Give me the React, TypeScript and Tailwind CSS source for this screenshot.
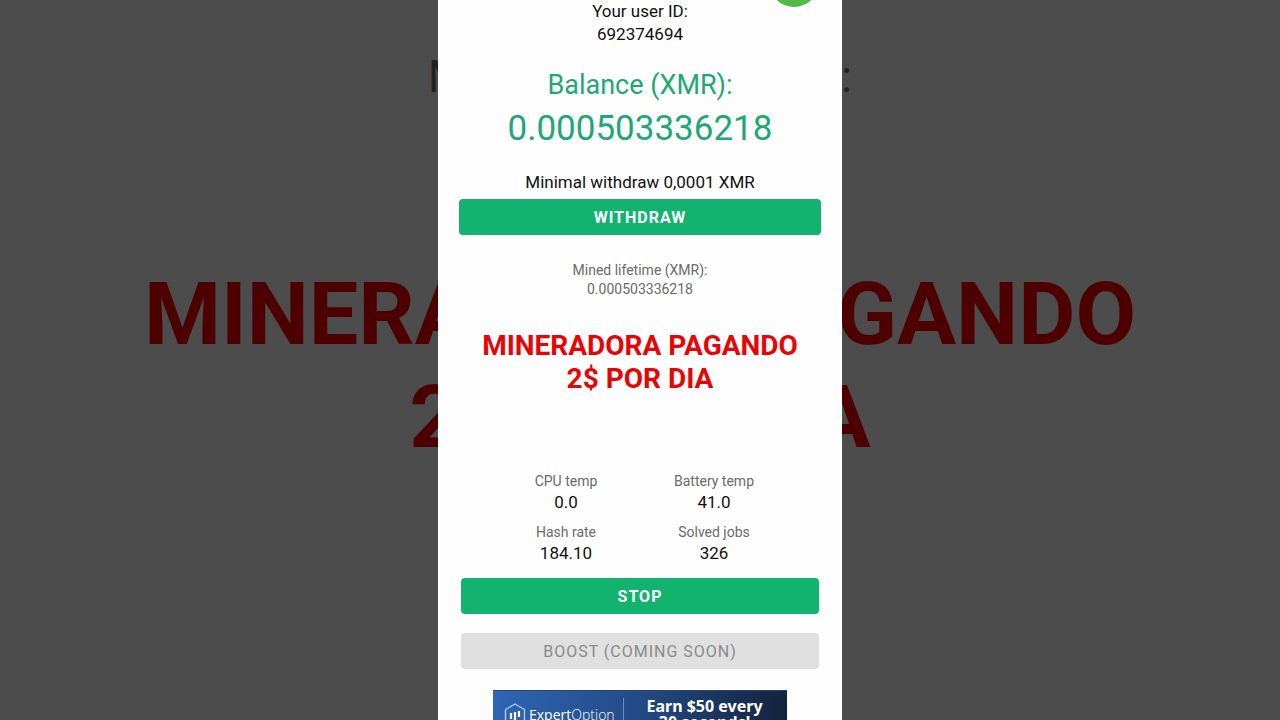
const stats = [
    { label: "CPU temp", value: "0.0" },
    { label: "Battery temp", value: "41.0" },
    { label: "Hash rate", value: "184.10" },
    { label: "Solved jobs", value: "326" },
];

// Enlarged, darkened copy of the screen that fills the sides
const Backdrop = () => (
    <div aria-hidden="true" className="absolute inset-0 overflow-hidden whitespace-nowrap pt-[47px]">
        <div className="flex flex-col items-center">
            <p className="text-[44px] leading-[60px] text-[#222222]">Mined lifetime (XMR):</p>
            <p className="mt-[155px] text-center text-[88px] leading-[103px] font-bold text-[#4c0000]">
                MINERADORA PAGANDO
                <br />
                2$ POR DIA
            </p>
        </div>
    </div>
);

const AdBanner = () => (
    <a
        href="#ad"
        className="mt-[21px] flex h-[46px] w-[294px] shrink-0 items-start self-center border-t border-[#2b4470] bg-linear-to-r from-[#2f66b5] via-[#234a86] to-[#13233d] pl-[11px] text-white"
    >
        <svg className="mt-3 h-6 w-[22px] shrink-0" viewBox="0 0 22 24" fill="none">
            <path
                d="M11 1 L20.5 6.5 V17.5 L11 23 L1.5 17.5 V6.5 Z"
                stroke="#a9cdf2"
                strokeWidth="1.4"
                strokeLinejoin="round"
            />
            <path d="M7 10 V16 M11 9 V17 M15 8 V14" stroke="#ffffff" strokeWidth="2.2" />
        </svg>
        <span className="mt-3 ml-[3px] w-[94px] text-left font-['Open_Sans',sans-serif] text-[14px] leading-6">
            <span className="font-medium">Expert</span>
            <span className="font-light">Option</span>
        </span>
        <span className="mt-[7px] h-8 w-px bg-[#6f8db8]" />
        <span className="flex-1 pt-[7px] pr-[2px] text-center font-['Noto_Sans',sans-serif] text-[16px] leading-[16px] font-bold">
            Earn $50 every
            <br />
            30 seconds!
        </span>
    </a>
);

const App = () => {
    return (
        <div className="relative h-screen overflow-hidden bg-[#4c4c4c] font-[Roboto,sans-serif]">
            <Backdrop />
            <main className="relative mx-auto flex h-full w-full max-w-[404px] flex-col overflow-hidden bg-[#fefefe] px-[21px] text-center text-[#111111]">
                <span className="absolute -top-[43px] right-[23px] size-[50px] rounded-full bg-[#55b948]" />

                <div className="flex flex-col gap-px text-[17px] leading-[22px]">
                    <p>Your user ID:</p>
                    <p>692374694</p>
                </div>

                <div className="mt-[22px] text-[#1fa876]">
                    <h1 className="text-[27px] leading-[36px]">Balance (XMR):</h1>
                    <p className="text-[35px] leading-[52px]">0.000503336218</p>
                </div>

                <p className="mt-[15px] text-[17px] leading-6">Minimal withdraw 0,0001 XMR</p>
                <button className="mt-[5px] h-9 shrink-0 rounded-[4px] bg-[#12b26f] pt-[2px] text-[16px] font-bold tracking-[1px] text-white">
                    WITHDRAW
                </button>

                <div className="mt-[26px] text-[14px] leading-[19px] text-[#6b6b6b]">
                    <p>Mined lifetime (XMR):</p>
                    <p>0.000503336218</p>
                </div>

                <h2 className="mt-[30px] text-[28px] leading-[33px] font-bold text-[#e80404]">
                    MINERADORA PAGANDO
                    <br />
                    2$ POR DIA
                </h2>

                <dl className="mt-[76px] grid grid-cols-[148px_148px] justify-center gap-y-[9px]">
                    {stats.map((stat) => (
                        <div key={stat.label}>
                            <dt className="text-[14px] leading-5 text-[#6b6b6b]">{stat.label}</dt>
                            <dd className="text-[17px] leading-[22px]">{stat.value}</dd>
                        </div>
                    ))}
                </dl>

                <div className="mt-[14px] flex flex-col gap-[19px] px-[2px]">
                    <button className="h-9 rounded-[4px] bg-[#12b26f] pt-[2px] text-[16px] font-bold tracking-[1px] text-white">
                        STOP
                    </button>
                    <button
                        disabled
                        className="h-9 rounded-[4px] bg-[#e0e0e0] pt-[2px] text-[16px] tracking-[1px] text-[#8a8a8a]"
                    >
                        BOOST (COMING SOON)
                    </button>
                </div>

                <AdBanner />
            </main>
        </div>
    );
};

export default App;
